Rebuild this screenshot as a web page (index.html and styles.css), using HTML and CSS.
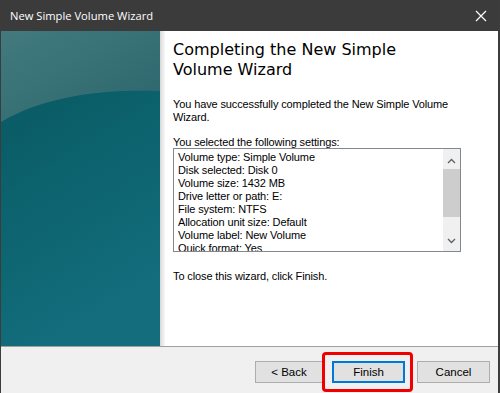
FILE: index.html
```html
<!DOCTYPE html>
<html lang="en">
<head>
    <meta charset="UTF-8">
    <title>New Simple Volume Wizard</title>
    <link rel="stylesheet" href="styles.css">
</head>
<body>
    <div class="window">
        <div class="titlebar">
            <span class="title">New Simple Volume Wizard</span>
            <svg class="close" width="12" height="12" viewBox="0 0 12 12">
                <path d="M1 1 L11 11 M11 1 L1 11" stroke="#ffffff" stroke-width="1.2" fill="none"/>
            </svg>
        </div>
        <div class="main">
            <div class="side">
                <svg width="159" height="315" viewBox="0 0 159 315" preserveAspectRatio="none">
                    <defs>
                        <linearGradient id="deep" x1="0" y1="0" x2="0.3" y2="1">
                            <stop offset="0" stop-color="#07555d"/>
                            <stop offset="0.5" stop-color="#0c626d"/>
                            <stop offset="1" stop-color="#136d7c"/>
                        </linearGradient>
                        <linearGradient id="light" x1="0" y1="0" x2="1" y2="1">
                            <stop offset="0" stop-color="#427a7e"/>
                            <stop offset="1" stop-color="#2b666c"/>
                        </linearGradient>
                    </defs>
                    <rect width="159" height="315" fill="url(#deep)"/>
                    <path d="M0 0 H159 V60 C105 58 45 64 0 91 Z" fill="url(#light)"/>
                </svg>
            </div>
            <div class="strip"></div>
            <div class="content">
                <h1>Completing the New Simple Volume Wizard</h1>
                <p class="intro">You have successfully completed the New Simple Volume Wizard.</p>
                <p class="label">You selected the following settings:</p>
                <div class="listbox">
                    <ul class="items">
                        <li>Volume type: Simple Volume</li>
                        <li>Disk selected: Disk 0</li>
                        <li>Volume size: 1432 MB</li>
                        <li>Drive letter or path: E:</li>
                        <li>File system: NTFS</li>
                        <li>Allocation unit size: Default</li>
                        <li>Volume label: New Volume</li>
                        <li>Quick format: Yes</li>
                    </ul>
                    <div class="scrollbar">
                        <svg class="arrow" width="9" height="6" viewBox="0 0 9 6">
                            <path d="M1 5 L4.5 1.5 L8 5" stroke="#606060" stroke-width="1.3" fill="none"/>
                        </svg>
                        <div class="track"><div class="thumb"></div></div>
                        <svg class="arrow" width="9" height="6" viewBox="0 0 9 6">
                            <path d="M1 1 L4.5 4.5 L8 1" stroke="#606060" stroke-width="1.3" fill="none"/>
                        </svg>
                    </div>
                </div>
                <p class="closing">To close this wizard, click Finish.</p>
            </div>
        </div>
        <div class="footer">
            <button class="btn">&lt; Back</button>
            <button class="btn btn-default">Finish</button>
            <button class="btn btn-cancel">Cancel</button>
            <div class="highlight"></div>
        </div>
    </div>
</body>
</html>
```

FILE: styles.css
```css
* {
    margin: 0;
    padding: 0;
    box-sizing: border-box;
}

body {
    width: 500px;
    height: 393px;
    overflow: hidden;
    background: #f0f0f0;
    font-family: 'Liberation Sans', Arial, sans-serif;
    font-size: 11px;
    color: #000000;
}

.window {
    width: 500px;
    height: 393px;
    border-left: 1px solid #3c3c3c;
    border-right: 2px solid #3c3c3c;
    display: flex;
    flex-direction: column;
}

.titlebar {
    height: 31px;
    background: #3b3b3b;
    display: flex;
    align-items: center;
    justify-content: space-between;
    padding: 0 10px 0 9px;
    color: #ffffff;
}

.title {
    font-family: 'Open Sans', 'Noto Sans', sans-serif;
    font-size: 11.2px;
}

.close {
    margin-right: 1px;
}

.main {
    height: 315px;
    display: flex;
}

.side {
    width: 159px;
    height: 315px;
}

.side svg {
    display: block;
}

.strip {
    width: 5px;
    background: linear-gradient(to right, #d6d6d6, #e9e9e9 50%, #f7f7f7);
}

.content {
    flex: 1;
    background: #ffffff;
    padding: 9px 0 0 8px;
}

.content h1 {
    width: 270px;
    font-family: 'DejaVu Sans', Verdana, sans-serif;
    font-size: 16px;
    font-weight: normal;
    line-height: 20px;
}

.intro {
    width: 288px;
    margin-top: 18px;
    line-height: 13px;
    letter-spacing: -0.12px;
}

.label {
    margin-top: 12px;
    line-height: 13px;
    letter-spacing: -0.12px;
}

.listbox {
    width: 288px;
    height: 104px;
    margin-top: -1px;
    border: 1px solid #828790;
    display: flex;
}

.items {
    flex: 1;
    list-style: none;
    padding: 2px 0 0 4px;
    overflow: hidden;
    line-height: 13px;
    letter-spacing: -0.12px;
}

.scrollbar {
    width: 17px;
    background: #f0f0f0;
    display: flex;
    flex-direction: column;
    align-items: center;
    padding: 9px 0 7px;
}

.track {
    flex: 1;
    width: 100%;
    padding: 5px 0 21px;
}

.thumb {
    width: 100%;
    height: 100%;
    background: #cdcdcd;
}

.closing {
    margin-top: 18px;
    line-height: 13px;
    letter-spacing: -0.12px;
}

.footer {
    position: relative;
    height: 47px;
    border-top: 1px solid #a0a0a0;
    background: #f0f0f0;
    display: flex;
    align-items: flex-start;
    padding: 14px 0 0 254px;
}

.btn {
    width: 68px;
    height: 22px;
    font-family: 'Liberation Sans', Arial, sans-serif;
    font-size: 11.5px;
    background: #e1e1e1;
    border: 1px solid #adadad;
    color: #000000;
}

.btn-default {
    width: 73px;
    margin-left: 9px;
    border: 2px solid #0078d7;
}

.btn-cancel {
    width: 73px;
    margin-left: 12px;
}

/* annotation box drawn over the Finish button */
.highlight {
    position: absolute;
    left: 321px;
    top: 5px;
    width: 91px;
    height: 40px;
    border: 3px solid #f00000;
    border-radius: 4px;
}
```
